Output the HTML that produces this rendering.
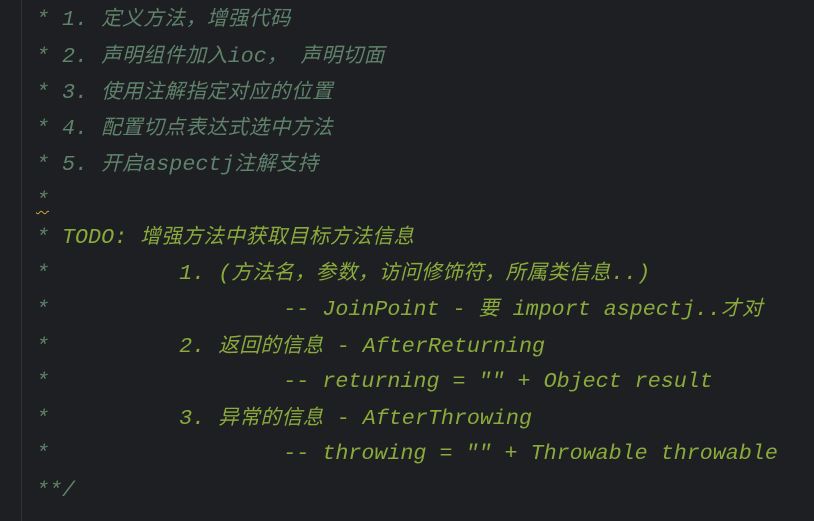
<!DOCTYPE html>
<html><head><meta charset="utf-8"><style>
html,body{margin:0;padding:0;background:#1e1f22;width:814px;height:521px;overflow:hidden}
.g{position:absolute;left:21px;top:0;width:1px;height:521px;background:#313438}
.l{position:absolute;left:36px;height:36px;line-height:36px;white-space:pre;font-family:"Liberation Mono","Noto Sans CJK SC",monospace;font-size:21.7px;font-style:italic;color:#5f826b}
.c{font-family:"Liberation Sans","Noto Sans CJK SC",sans-serif;font-size:20.5px;letter-spacing:0.6px}
.t{color:#8aab3c}
.w{text-decoration:underline wavy #c9a63a;text-underline-offset:4px;text-decoration-thickness:1px}
</style></head><body>
<div class="g"></div>
<div class="l" style="top:1px">* 1. <span class="c">定义方法，增强代码</span></div>
<div class="l" style="top:38px">* 2. <span class="c">声明组件加入</span>ioc<span class="c">，  声明切面</span></div>
<div class="l" style="top:74px">* 3. <span class="c">使用注解指定对应的位置</span></div>
<div class="l" style="top:110px">* 4. <span class="c">配置切点表达式选中方法</span></div>
<div class="l" style="top:146px">* 5. <span class="c">开启</span>aspectj<span class="c">注解支持</span></div>
<div class="l" style="top:183px"><span class="w">*</span></div>
<div class="l" style="top:219px">* <span class="t">TODO: <span class="c">增强方法中获取目标方法信息</span></span></div>
<div class="l" style="top:255px">*          <span class="t">1. (<span class="c">方法名，参数，访问修饰符，所属类信息</span>..)</span></div>
<div class="l" style="top:291px">*                  <span class="t">-- JoinPoint - <span class="c">要</span> import aspectj..<span class="c">才对</span></span></div>
<div class="l" style="top:328px">*          <span class="t">2. <span class="c">返回的信息</span> - AfterReturning</span></div>
<div class="l" style="top:364px">*                  <span class="t">-- returning = "" + Object result</span></div>
<div class="l" style="top:400px">*          <span class="t">3. <span class="c">异常的信息</span> - AfterThrowing</span></div>
<div class="l" style="top:436px">*                  <span class="t">-- throwing = "" + Throwable throwable</span></div>
<div class="l" style="top:473px">**/</div>
</body></html>
